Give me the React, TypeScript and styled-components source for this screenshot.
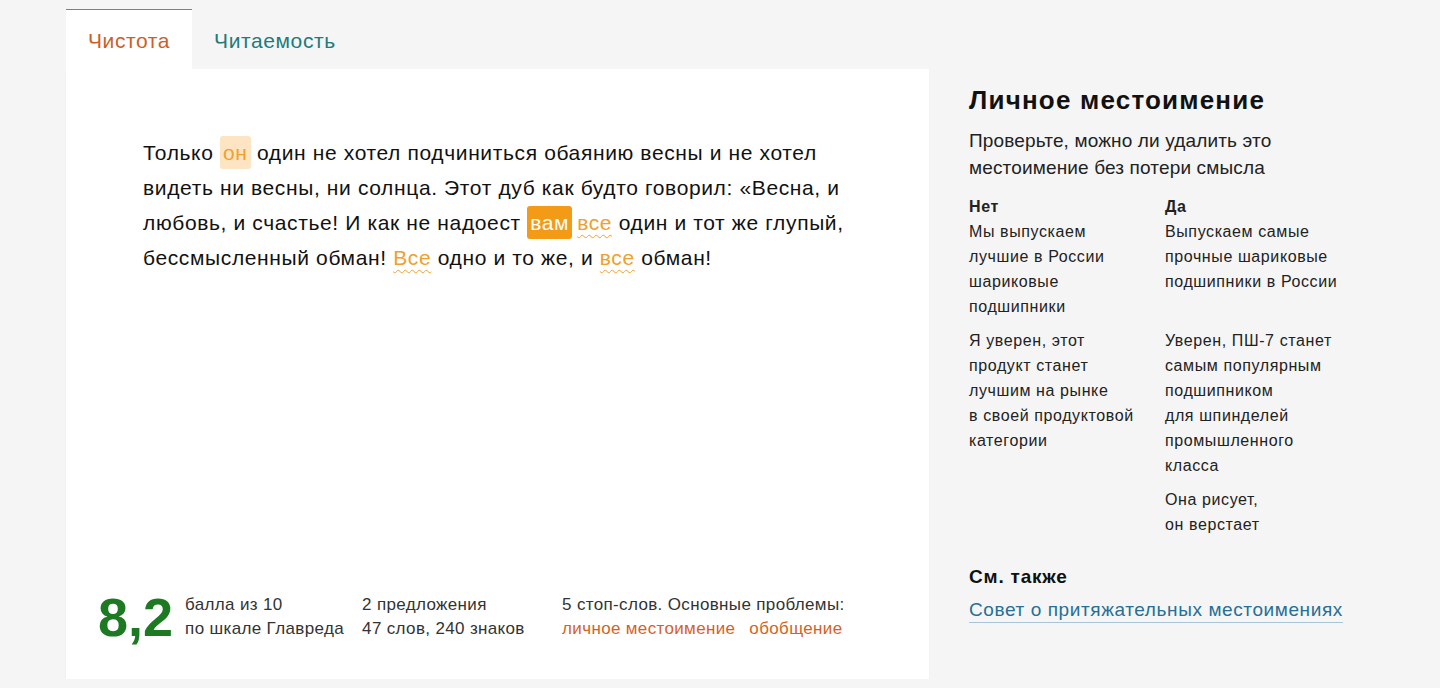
import React from 'react'
import styled, { createGlobalStyle } from 'styled-components'

type Example = {
  no: string[]
  yes: string[]
}

const examples: Example[] = [
  {
    no: ['Мы выпускаем', 'лучшие в России', 'шариковые', 'подшипники'],
    yes: ['Выпускаем самые', 'прочные шариковые', 'подшипники в России'],
  },
  {
    no: [
      'Я уверен, этот',
      'продукт станет',
      'лучшим на рынке',
      'в своей продуктовой',
      'категории',
    ],
    yes: [
      'Уверен, ПШ-7 станет',
      'самым популярным',
      'подшипником',
      'для шпинделей',
      'промышленного',
      'класса',
    ],
  },
  {
    no: [],
    yes: ['Она рисует,', 'он верстает'],
  },
]

const GlobalStyle = createGlobalStyle`
  html, body {
    margin: 0;
    padding: 0;
    background: #f5f5f5;
  }
  body {
    font-family: 'Liberation Sans', Arial, sans-serif;
    color: #111;
  }
`

export default function App() {
  return (
    <>
      <GlobalStyle />
      <Page>
        <MainColumn>
          <Tabs>
            <Tab active>Чистота</Tab>
            <Tab>Читаемость</Tab>
          </Tabs>
          <Panel>
            <Article>
              Только <Soft>он</Soft> один не хотел подчиниться обаянию весны и
              не хотел видеть ни весны, ни солнца. Этот дуб как будто говорил:
              «Весна, и любовь, и счастье! И как не надоест <Strong>вам</Strong>
              <Wavy>все</Wavy> один и тот же глупый, бессмысленный обман!{' '}
              <Wavy>Все</Wavy> одно и то же, и <Wavy>все</Wavy> обман!
            </Article>
            <Stats>
              <Score>8,2</Score>
              <StatCol width={177}>
                <div>балла из 10</div>
                <div>по шкале Главреда</div>
              </StatCol>
              <StatCol width={200}>
                <div>2 предложения</div>
                <div>47 слов, 240 знаков</div>
              </StatCol>
              <StatCol>
                <div>5 стоп-слов. Основные проблемы:</div>
                <Problems>
                  <Problem>личное местоимение</Problem>
                  <Problem>обобщение</Problem>
                </Problems>
              </StatCol>
            </Stats>
          </Panel>
        </MainColumn>
        <Sidebar>
          <Title>Личное местоимение</Title>
          <Lead>
            Проверьте, можно ли удалить это
            <br />
            местоимение без потери смысла
          </Lead>
          <ExampleGrid>
            <ColHead>Нет</ColHead>
            <ColHead>Да</ColHead>
            {examples.map((ex, i) => (
              <React.Fragment key={i}>
                <ExampleText>
                  {ex.no.map((l) => (
                    <div key={l}>{l}</div>
                  ))}
                </ExampleText>
                <ExampleText>
                  {ex.yes.map((l) => (
                    <div key={l}>{l}</div>
                  ))}
                </ExampleText>
              </React.Fragment>
            ))}
          </ExampleGrid>
          <SeeAlso>См. также</SeeAlso>
          <AdviceLink href="#">Совет о притяжательных местоимениях</AdviceLink>
        </Sidebar>
      </Page>
    </>
  )
}

const Page = styled.div`
  display: flex;
  align-items: flex-start;
  padding: 9px 0 0 66px;
`

const MainColumn = styled.div`
  width: 863px;
  flex-shrink: 0;
  display: flex;
  flex-direction: column;
`

const Tabs = styled.div`
  display: flex;
  height: 60px;
`

const Tab = styled.div<{ active?: boolean }>`
  box-sizing: border-box;
  height: 60px;
  padding: 19px 22px 0;
  font-size: 21px;
  line-height: 24px;
  letter-spacing: 0.6px;
  border-top: 1px solid ${(p) => (p.active ? '#d2652d' : 'transparent')};
  background: ${(p) => (p.active ? '#fff' : 'transparent')};
  color: ${(p) => (p.active ? '#cc5f27' : '#227a7c')};
  cursor: pointer;
`

const Panel = styled.div`
  box-sizing: border-box;
  height: 610px;
  background: #fff;
  box-shadow: 0 1px 2px rgba(0, 0, 0, 0.04);
  display: flex;
  flex-direction: column;
  padding: 66px 32px 36px;
`

const Article = styled.p`
  margin: 0;
  padding: 0 45px;
  max-width: 712px;
  font-size: 21px;
  line-height: 35px;
  letter-spacing: 0.63px;
  color: #111;
`

const Soft = styled.span`
  background: #fde4c2;
  color: #f0a02e;
  padding: 5px 3px;
  border-radius: 3px;
`

const Strong = styled.span`
  background: #f39a16;
  color: #fff;
  padding: 5px 3px;
  border-radius: 3px;
  margin-right: 5px;
`

const Wavy = styled.span`
  color: #f0a02e;
  text-decoration: underline wavy #f0a02e;
  text-decoration-thickness: 1px;
  text-underline-offset: 4px;
`

const Stats = styled.div`
  margin-top: auto;
  display: flex;
  align-items: center;
  font-size: 17px;
  line-height: 24px;
  letter-spacing: 0.35px;
  color: #333;
`

const Score = styled.div`
  font-size: 54px;
  line-height: 52px;
  font-weight: 700;
  letter-spacing: 0;
  color: #1d7a22;
  margin-right: 12px;
`

const StatCol = styled.div<{ width?: number }>`
  ${(p) => (p.width ? `width: ${p.width}px;` : '')}
  flex-shrink: 0;
`

const Problems = styled.div`
  display: flex;
  gap: 14px;
`

const Problem = styled.span`
  color: #d6611f;
  cursor: pointer;
`

const Sidebar = styled.aside`
  margin-left: 40px;
  padding-top: 76px;
  width: 420px;
  color: #111;
`

const Title = styled.h2`
  margin: 0;
  font-size: 26px;
  line-height: 30px;
  font-weight: 700;
  letter-spacing: 1.2px;
`

const Lead = styled.p`
  margin: 12px 0 13px;
  font-size: 19px;
  line-height: 27px;
  letter-spacing: 0.15px;
  color: #222;
`

const ExampleGrid = styled.div`
  display: grid;
  grid-template-columns: 196px 196px;
  row-gap: 9px;
  font-size: 16px;
  line-height: 25px;
  letter-spacing: 0.6px;
  color: #222;
`

const ColHead = styled.div`
  font-weight: 700;
  margin-bottom: -9px;
`

const ExampleText = styled.div``

const SeeAlso = styled.div`
  margin-top: 26px;
  font-size: 19px;
  line-height: 27px;
  font-weight: 700;
  letter-spacing: 0.8px;
`

const AdviceLink = styled.a`
  display: inline-block;
  margin-top: 8px;
  font-size: 19px;
  line-height: 24px;
  letter-spacing: 0.6px;
  color: #276f96;
  text-decoration: none;
  border-bottom: 1px solid #a9c6d8;
`
